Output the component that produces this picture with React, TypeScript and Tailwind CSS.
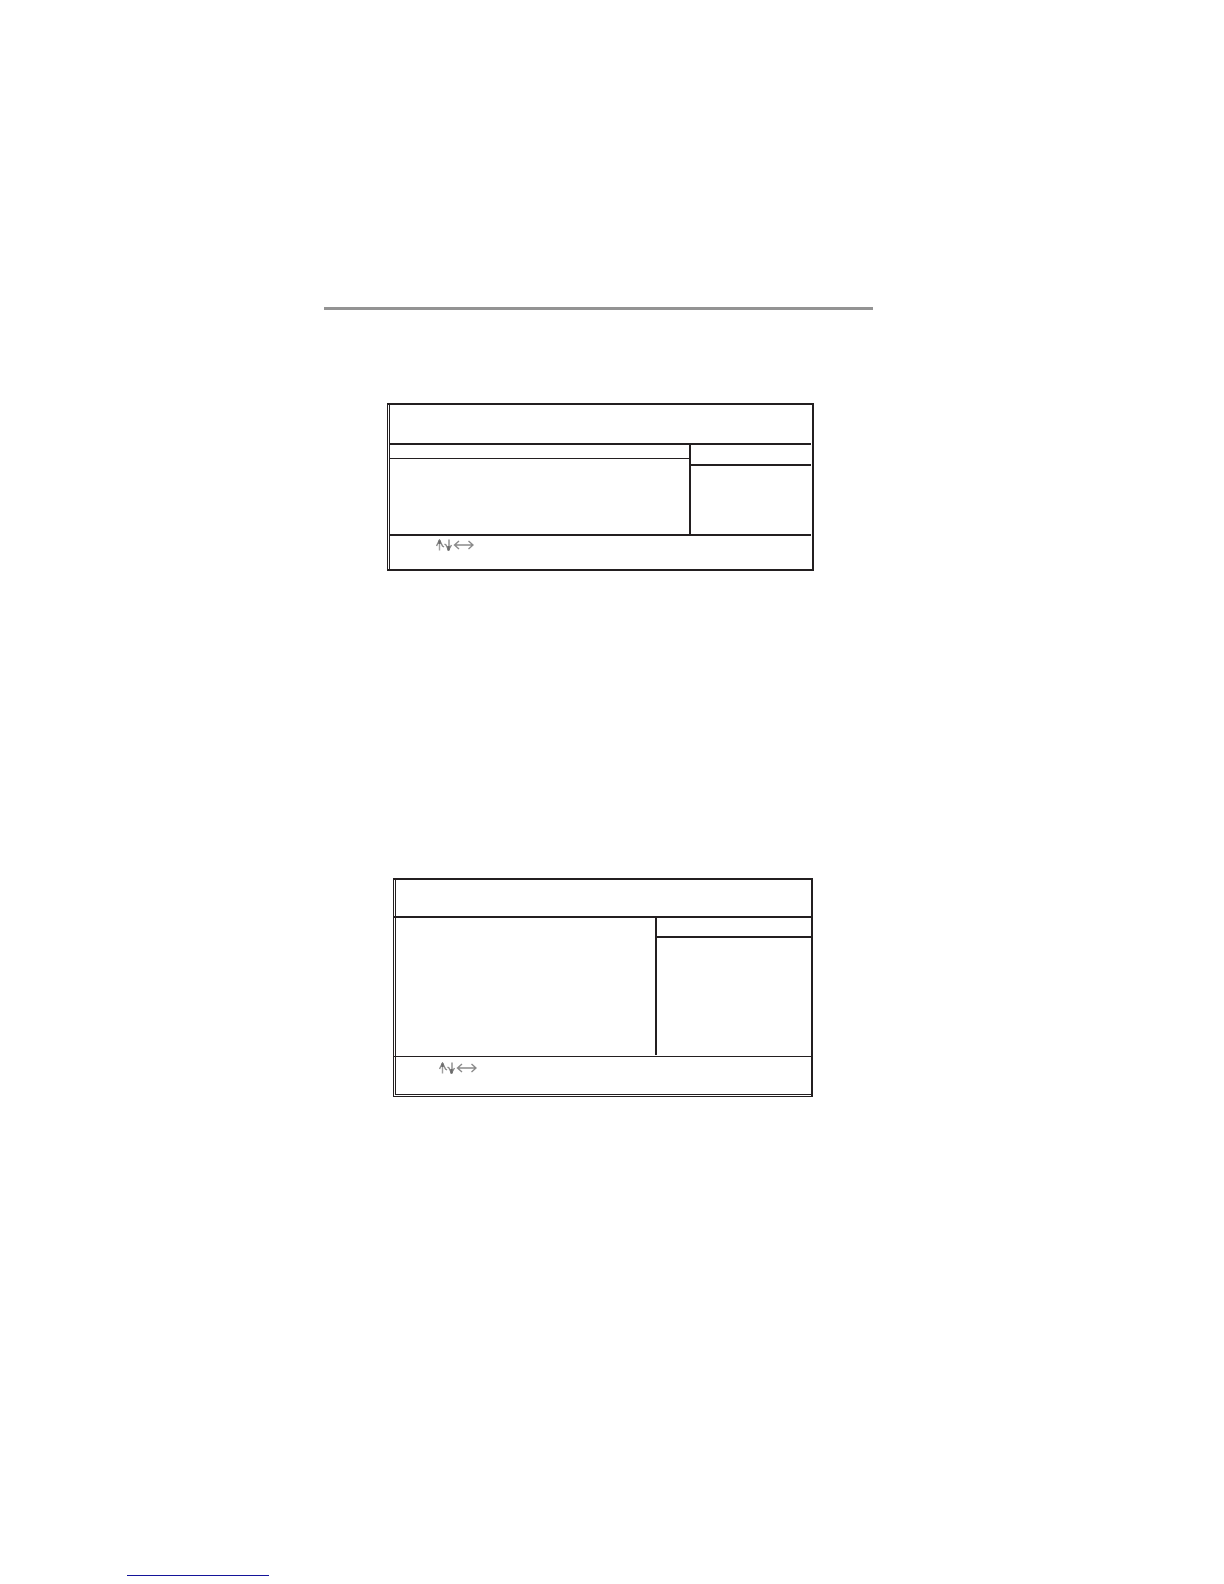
function ArrowKeys() {
  return (
    <svg
      role="img"
      aria-label="Arrow keys"
      viewBox="0 0 38 12"
      className="h-3 w-[38px] shrink-0"
      fill="none"
      stroke="#8a8a8a"
      strokeWidth="1.4"
    >
      <path d="M3.5 11.5V1" stroke="#a0a0a0" />
      <path d="M0.5 7L3.5 1L6.5 7L8 8" />
      <path d="M13 0.5V11" />
      <path d="M8.5 5L10 6L12.5 11L15.5 6" />
      <path d="M19 6H37M23 2L18.5 6L23 10M32.5 2L37 6L32.5 10" />
      <path d="M3.5 5V1.5M12.5 7V11.5" stroke="#6b6b6b" strokeWidth="2.4" />
    </svg>
  );
}

function SetupScreen() {
  return (
    <section className="mt-[93px] mr-[59px] ml-[63px] border-2 border-l border-[#231f20] px-px">
      <div className="border-l border-[#231f20]">
        <header className="h-10 border-b-2 border-[#231f20]" />
        <div className="flex h-[89px]">
          <div className="flex-1">
            <div className="h-3.5 border-b border-[#231f20]" />
          </div>
          <aside className="w-[122px] border-l-2 border-[#231f20]">
            <div className="h-[21px] border-b-2 border-[#231f20]" />
          </aside>
        </div>
        <footer className="h-[35px] border-t-2 border-[#231f20] pt-[3px] pl-[46px]">
          <ArrowKeys />
        </footer>
      </div>
    </section>
  );
}

function OptionsScreen() {
  return (
    <section className="mt-[307px] mr-[60px] ml-[69px] border border-t-2 border-r-2 border-[#231f20]">
      <header className="border-b-2 border-[#231f20] pl-px">
        <div className="h-9 border-l border-[#231f20]" />
      </header>
      <div className="pl-px">
        <div className="flex h-[138px] border-l border-[#231f20]">
          <div className="flex-1" />
          <aside className="mb-px w-[156px] border-l-2 border-[#231f20]">
            <div className="h-5 border-b-2 border-[#231f20]" />
          </aside>
        </div>
      </div>
      <footer className="border-t border-[#231f20] pb-px pl-px">
        <div className="h-[38px] border-b border-l border-[#231f20] pt-[5px] pl-[43px]">
          <ArrowKeys />
        </div>
      </footer>
    </section>
  );
}

export default function App() {
  return (
    <div className="bg-white pb-2 font-['Liberation_Sans',sans-serif]">
      <main className="pt-[307px] pr-[351px] pl-[324px]">
        <hr className="border-t-[3px] border-[#939393]" />
        <SetupScreen />
        <OptionsScreen />
      </main>
      <a
        href="#top"
        aria-label="Back to top"
        className="mt-[466px] ml-[127px] block h-[13px] w-[142px] border-b border-[#14149a]"
      />
    </div>
  );
}
